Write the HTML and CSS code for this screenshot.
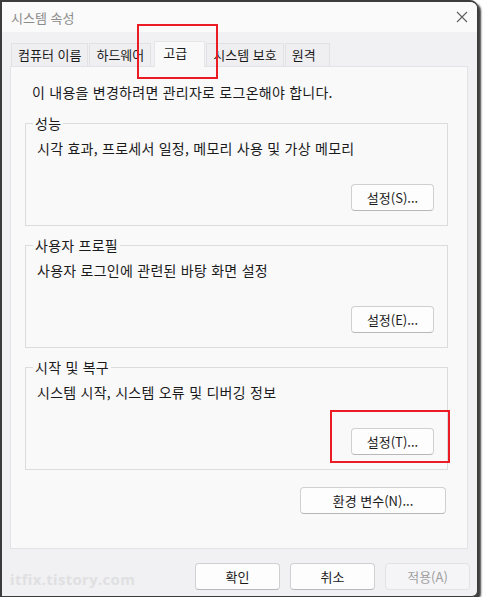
FILE: index.html
```html
<!DOCTYPE html>
<html lang="ko">
<head>
    <meta charset="UTF-8">
    <meta name="viewport" content="width=device-width, initial-scale=1.0">
    <title>시스템 속성</title>
    <link rel="stylesheet" href="styles.css">
</head>
<body>
    <div class="window">
        <div class="title-bar">
            <span class="title">시스템 속성</span>
            <svg class="close" width="12" height="12" viewBox="0 0 12 12">
                <path d="M1 1 L11 11 M11 1 L1 11" stroke="#606060" stroke-width="1.1" fill="none"/>
            </svg>
        </div>
        <div class="tabs">
            <div class="tab">컴퓨터 이름</div>
            <div class="tab">하드웨어</div>
            <div class="tab active">고급</div>
            <div class="tab">시스템 보호</div>
            <div class="tab tab-last">원격</div>
        </div>
        <div class="panel">
            <p class="note">이 내용을 변경하려면 관리자로 로그온해야 합니다.</p>
            <fieldset class="group">
                <legend>성능</legend>
                <p>시각 효과, 프로세서 일정, 메모리 사용 및 가상 메모리</p>
                <div class="group-actions">
                    <button type="button" class="btn">설정(S)...</button>
                </div>
            </fieldset>
            <fieldset class="group">
                <legend>사용자 프로필</legend>
                <p>사용자 로그인에 관련된 바탕 화면 설정</p>
                <div class="group-actions">
                    <button type="button" class="btn">설정(E)...</button>
                </div>
            </fieldset>
            <fieldset class="group">
                <legend>시작 및 복구</legend>
                <p>시스템 시작, 시스템 오류 및 디버깅 정보</p>
                <div class="group-actions">
                    <button type="button" class="btn">설정(T)...</button>
                </div>
            </fieldset>
            <div class="env-row">
                <button type="button" class="btn btn-wide">환경 변수(N)...</button>
            </div>
        </div>
        <div class="footer">
            <span class="watermark">itfix.tistory.com</span>
            <button type="button" class="btn btn-footer">확인</button>
            <button type="button" class="btn btn-footer">취소</button>
            <button type="button" class="btn btn-footer" disabled>적용(A)</button>
        </div>
    </div>
    <div class="mark mark-tab"></div>
    <div class="mark mark-button"></div>
</body>
</html>
```

FILE: styles.css
```css
body {
    margin: 0;
    background-color: #ffffff;
    font-family: "Noto Sans CJK KR", "Noto Sans", sans-serif;
    font-size: 14px;
    color: #1b1b1b;
}
.window {
    width: 478px;
    height: 597px;
    border: 1px solid #3c3c3c;
    border-left-width: 2px;
    border-top-width: 2px;
    border-radius: 0 8px 6px 0;
    box-shadow: 3px 3px 2px rgba(0, 0, 0, 0.75);
    background-color: #f1f1f3;
    display: flex;
    flex-direction: column;
    box-sizing: border-box;
    overflow: hidden;
}
.title-bar {
    height: 30px;
    background-color: #fafafa;
    display: flex;
    align-items: center;
    justify-content: space-between;
    padding: 0 9px 0 9px;
    flex-shrink: 0;
}
.title {
    color: #8c8c8c;
    font-size: 13px;
}
.close {
    margin-top: -1px;
}
.tabs {
    display: flex;
    align-items: flex-end;
    height: 34px;
    padding-left: 9px;
    background-color: #f1f1f3;
    flex-shrink: 0;
    font-size: 13px;
}
.tab {
    height: 22px;
    line-height: 22px;
    padding: 0 6px;
    margin-right: 1px;
    background-color: #efeff1;
    border: 1px solid #e2e2e4;
    border-bottom: none;
    color: #1b1b1b;
}
.tab.active {
    height: 25px;
    line-height: 22px;
    padding: 0 17px 0 8px;
    margin: 0 1px -1px 2px;
    background-color: #f9f9fa;
    border-color: #e6e6e8;
    position: relative;
    z-index: 1;
}
.tab-last {
    padding-right: 13px;
}
.panel {
    margin: 0 9px 0 8px;
    height: 483px;
    background-color: #f9f9fa;
    border: 1px solid #e3e3e5;
    padding: 0 19px 0 14px;
    box-sizing: border-box;
    flex-shrink: 0;
    letter-spacing: 0.25px;
}
.note {
    margin: 16px 0 11px 7px;
    line-height: 19px;
}
.group {
    margin: 0 0 9px 0;
    padding: 5px 13px 14px 11px;
    border: 1px solid #dcdcde;
}
.group legend {
    padding: 0 2px;
    margin-left: -4px;
    line-height: 20px;
}
.group p {
    margin: 0;
    line-height: 20px;
}
.group-actions {
    display: flex;
    justify-content: flex-end;
    margin-top: 26px;
}
.btn {
    font-family: "Noto Sans CJK KR", "Noto Sans", sans-serif;
    font-size: 13px;
    letter-spacing: 0;
    color: #1b1b1b;
    background-color: #fdfdfd;
    border: 1px solid #d0d0d2;
    border-bottom-color: #b8b8ba;
    border-radius: 4px;
    height: 27px;
    width: 83px;
    padding: 0;
    cursor: pointer;
}
.btn:disabled {
    color: #a0a0a0;
    background-color: #f5f5f7;
    border-color: #e2e2e4;
    cursor: default;
}
.btn-wide {
    width: 146px;
}
.env-row {
    display: flex;
    justify-content: flex-end;
    margin-top: 17px;
    margin-right: 2px;
}
.footer {
    flex: 1;
    display: flex;
    align-items: flex-start;
    gap: 10px;
    padding: 14px 7px 0 8px;
}
.btn-footer {
    width: 85px;
}
.watermark {
    margin-right: auto;
    margin-top: 6px;
    font-family: "Open Sans", "Liberation Sans", sans-serif;
    font-weight: bold;
    font-size: 15px;
    color: #e0e0e2;
    letter-spacing: 0.3px;
}
.mark {
    position: absolute;
    border: 2px solid #ec1c24;
    box-sizing: border-box;
}
.mark-tab {
    left: 137px;
    top: 24px;
    width: 81px;
    height: 55px;
}
.mark-button {
    left: 330px;
    top: 410px;
    width: 120px;
    height: 53px;
}
```
